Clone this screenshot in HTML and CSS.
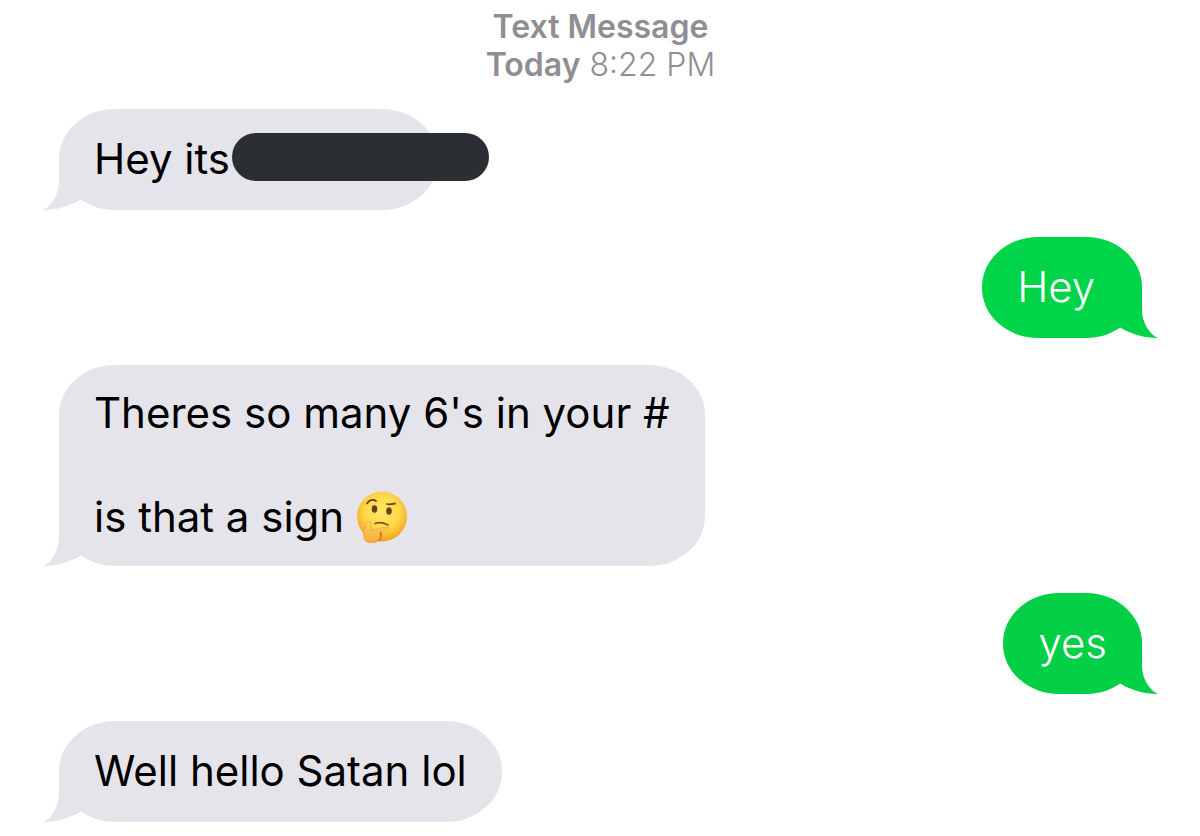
FILE: index.html
```html
<!DOCTYPE html>
<html lang="en">
<head>
  <meta charset="UTF-8" />
  <title>Messages</title>
  <meta name="viewport" content="width=device-width, initial-scale=1.0" />
  <link rel="stylesheet" href="styles.css">
</head>
<body>
  <svg class="defs" aria-hidden="true">
    <symbol id="tail" viewBox="0 0 60 50">
      <path d="M16 0V22C16 34 9 46 0 50C14 50 27 46 37 40L60 20L50 0Z" />
    </symbol>
  </svg>

  <main class="chat">
    <header class="stamp">
      <div><strong>Text Message</strong></div>
      <div><strong>Today</strong> <time>8:22 PM</time></div>
    </header>

    <div class="messages">
      <div class="bubble received">
        <svg class="tail"><use href="#tail" /></svg>
        <p>Hey its<span class="redacted"></span></p>
      </div>

      <div class="bubble sent">
        <svg class="tail"><use href="#tail" /></svg>
        <p>Hey&nbsp;</p>
      </div>

      <div class="bubble received">
        <svg class="tail"><use href="#tail" /></svg>
        <p>Theres so many 6's in your #<br><br>is that a sign
          <svg class="emoji" viewBox="0 0 52 52" role="img" aria-label="thinking face">
            <defs>
              <radialGradient id="face" cx="50%" cy="40%" r="58%">
                <stop offset="0" stop-color="#ffe763" />
                <stop offset="0.6" stop-color="#ffd84a" />
                <stop offset="1" stop-color="#f4a51f" />
              </radialGradient>
              <linearGradient id="hand" x1="0" y1="0" x2="0" y2="1">
                <stop offset="0" stop-color="#ffd866" />
                <stop offset="1" stop-color="#f5a93a" />
              </linearGradient>
            </defs>
            <circle cx="26" cy="25.500" r="25" fill="url(#face)" />
            <path d="M11 12.500C13 9 17 8 20 10" fill="none" stroke="#67421a" stroke-width="1.800" stroke-linecap="round" />
            <path d="M31 13C34 14 36 13 39 12.500" fill="none" stroke="#67421a" stroke-width="1.800" stroke-linecap="round" />
            <ellipse cx="18.500" cy="18" rx="2.800" ry="3.800" fill="#67421a" />
            <ellipse cx="33" cy="20" rx="2.800" ry="3.800" fill="#67421a" />
            <path d="M19 32.500C23 31 28 32 32 34" fill="none" stroke="#8a5419" stroke-width="1.700" stroke-linecap="round" />
            <path d="M14 31C11 30 9 33 10 37C7 39 7 43 8 47C9 51 12 52 16 51.500C21 51.500 24 50 24.500 46C25 43 23.500 42 24 41L31 38.500C34 37.500 33 35.500 30 36C25 37 20 38 15.500 40C14.500 38 15.500 33 14 31Z" fill="url(#hand)" stroke="#e8982c" stroke-width="0.600" />
            <path d="M24 41C26 43 25 48 23 50" fill="none" stroke="#b96a15" stroke-width="1.200" />
          </svg>
        </p>
      </div>

      <div class="bubble sent later">
        <svg class="tail"><use href="#tail" /></svg>
        <p>yes</p>
      </div>

      <div class="bubble received">
        <svg class="tail"><use href="#tail" /></svg>
        <p>Well hello Satan lol</p>
      </div>
    </div>
  </main>
</body>
</html>
```

FILE: styles.css
```css
body {
  font-family: Inter, "Liberation Sans", sans-serif;
  background: #fff;
  margin: 0;
}
.defs {
  display: none;
}
.chat {
  padding: 8px 58px 15px 59px;
}
.stamp {
  color: #8f8e94;
  font-size: 32px;
  line-height: 38px;
  text-align: center;
}
.stamp strong {
  font-weight: 600;
}
.stamp time {
  font-weight: 300;
}
.messages {
  display: flex;
  flex-direction: column;
  gap: 27px;
  margin-top: 25px;
}
.bubble {
  position: relative;
  display: flex;
  align-items: center;
  box-sizing: border-box;
  min-height: 101px;
  max-width: 75%;
  padding: 22px 35px 23px;
  border-radius: 56px / 50px;
  font-size: 42px;
  line-height: 52px;
}
/* keeps the text above the tail */
.bubble p {
  position: relative;
  margin: 0;
}
.received {
  align-self: flex-start;
  background: #e5e4ea;
  color: #000;
  fill: #e5e4ea;
}
.sent {
  align-self: flex-end;
  background: #00d549;
  color: #fff;
  fill: #00d549;
  font-weight: 350;
}
.later {
  background: #03cf47;
  fill: #03cf47;
}
.tail {
  position: absolute;
  bottom: 0;
  width: 60px;
  height: 50px;
}
.received .tail {
  left: -16px;
}
.sent .tail {
  right: -16px;
  transform: scaleX(-1);
}
/* the bar runs past the edge of its bubble */
.redacted {
  display: inline-block;
  width: 257px;
  height: 48px;
  margin-left: 2px;
  margin-right: -86px;
  border-radius: 24px;
  background: #2b2f33;
  vertical-align: -7px;
}
.emoji {
  width: 52px;
  height: 52px;
  vertical-align: bottom;
}
```
